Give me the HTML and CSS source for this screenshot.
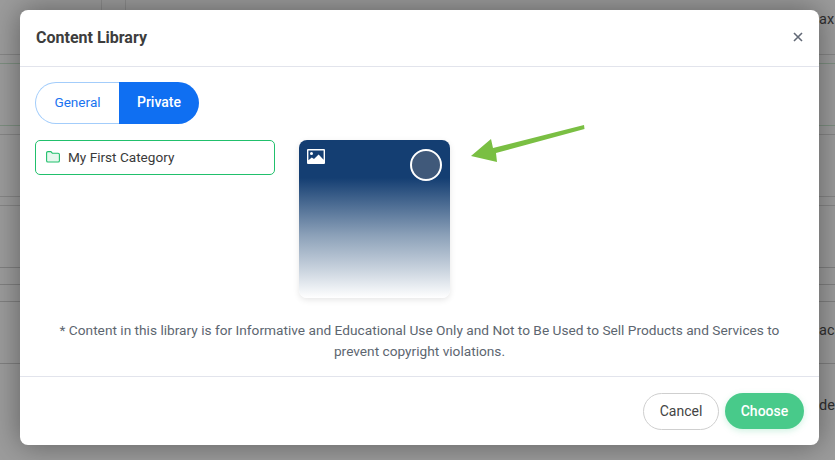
FILE: index.html
```html
<!DOCTYPE html>
<html lang="en">
<head>
<meta charset="utf-8">
<title>Content Library</title>
<link rel="stylesheet" href="styles.css">
</head>
<body>
<div class="backdrop">
  <span class="peek peek-ax">ax</span>
  <span class="peek peek-ace">ace</span>
  <span class="peek peek-de">de</span>
</div>
<div class="overlay">
  <section class="modal">
    <header class="modal-header">
      <h2 class="modal-title">Content Library</h2>
      <svg class="close" viewBox="0 0 10 10" width="10" height="10" aria-label="Close"><path d="M1 1l8 8M9 1l-8 8"/></svg>
    </header>
    <div class="modal-body">
      <div class="tabs">
        <button class="tab tab-general">General</button>
        <button class="tab tab-private">Private</button>
      </div>
      <div class="library">
        <div class="category">
          <svg class="folder" viewBox="0 0 14 12" width="14" height="12"><path d="M1.900.6h3l1.400 1.600h5.800c.7 0 1.300.6 1.300 1.300v6.200c0 .7-.6 1.300-1.300 1.300H1.900c-.7 0-1.300-.6-1.300-1.300V1.900C.6 1.200 1.200.6 1.900.6z"/></svg>
          <span>My First Category</span>
        </div>
        <div class="card">
          <svg class="image-icon" viewBox="0 0 18 15" width="18" height="15"><path fill-rule="evenodd" d="M1 0h16a1 1 0 0 1 1 1v13a1 1 0 0 1-1 1H1a1 1 0 0 1-1-1V1a1 1 0 0 1 1-1zm.4 1.400v9.800l3.400-2.800 2.200 1.600L11.600 5.500l5 5.200V1.400zM4.500 3a1.500 1.500 0 1 1 0 3 1.500 1.500 0 0 1 0-3z"/></svg>
          <span class="radio"></span>
        </div>
        <svg class="arrow" viewBox="0 0 114 38" width="114" height="38"><path d="M0 31L20 14 22 23 113 0 113.500 4 25 28 26 37z"/></svg>
      </div>
      <p class="note">* Content in this library is for Informative and Educational Use Only and Not to Be Used to Sell Products and Services to prevent copyright violations.</p>
    </div>
    <footer class="modal-footer">
      <button class="btn btn-cancel">Cancel</button>
      <button class="btn btn-choose">Choose</button>
    </footer>
  </section>
</div>
</body>
</html>
```

FILE: styles.css
```css
* { box-sizing: border-box; }
html, body { margin: 0; height: 100%; overflow: hidden; }
body {
  font-family: Roboto, "Liberation Sans", sans-serif;
  background: #9c9c9c;
}
.backdrop {
  position: fixed;
  inset: 0;
  background:
    linear-gradient(#868686, #868686) 0 54px / 100% 1px no-repeat,
    linear-gradient(#7d8f80, #7d8f80) 0 63px / 100% 1px no-repeat,
    linear-gradient(#7d8f80, #7d8f80) 0 125px / 100% 1px no-repeat,
    linear-gradient(#868686, #868686) 0 134px / 100% 1px no-repeat,
    linear-gradient(#868686, #868686) 0 196px / 100% 1px no-repeat,
    linear-gradient(#868686, #868686) 0 205px / 100% 1px no-repeat,
    linear-gradient(#808080, #808080) 0 267px / 100% 1px no-repeat,
    linear-gradient(#808080, #808080) 0 284px / 100% 1px no-repeat,
    linear-gradient(#808080, #808080) 0 301px / 100% 1px no-repeat,
    linear-gradient(#808080, #808080) 0 363px / 100% 1px no-repeat,
    linear-gradient(#8c8c8c, #8c8c8c) 101px 0 / 1px 10px no-repeat,
    linear-gradient(#8c8c8c, #8c8c8c) 125px 0 / 1px 10px no-repeat,
    #9c9c9c;
}
.peek {
  position: absolute;
  font-size: 14.5px;
  line-height: 16px;
  color: #2f2f2f;
}
.peek-ax { left: 819px; top: 12px; }
.peek-ace { left: 819px; top: 323px; }
.peek-de { left: 819px; top: 398px; }
.overlay {
  position: fixed;
  inset: 0;
  padding: 10px 16px 15px 20px;
}
.modal {
  width: 799px;
  height: 435px;
  background: #fff;
  border-radius: 8px;
  box-shadow: 0 0 30px rgba(0, 0, 0, .4);
  display: flex;
  flex-direction: column;
}
.modal-header {
  height: 57px;
  flex: none;
  padding: 0 16px 2px 16px;
  border-bottom: 1px solid #e2e4ec;
  display: flex;
  align-items: center;
  justify-content: space-between;
}
.modal-title {
  margin: 0;
  font-size: 16px;
  font-weight: 700;
  color: #3d3d3d;
}
.close { fill: none; stroke: #626976; stroke-width: 1.600; }
.modal-body {
  flex: 1;
  padding: 15px 15px 0;
  display: flex;
  flex-direction: column;
}
.tabs { display: flex; }
.tab {
  height: 42px;
  border: 1px solid #a3cdfb;
  font-family: inherit;
  font-size: 14px;
  font-weight: 500;
  padding: 0 0 2px;
}
.tab-general {
  width: 84px;
  background: #fff;
  color: #1a73f0;
  border-radius: 21px 0 0 21px;
  border-right: 0;
  font-size: 13.6px;
  font-weight: 400;
}
.tab-private {
  width: 80px;
  background: #0f6ff2;
  color: #fff;
  border: 0;
  border-radius: 0 21px 21px 0;
}
.library {
  display: flex;
  align-items: flex-start;
  margin-top: 16px;
  height: 158px;
}
.category {
  width: 240px;
  height: 35px;
  border: 1px solid #21c06c;
  border-radius: 5px;
  padding: 0 10px 1px;
  display: flex;
  align-items: center;
  gap: 8px;
  font-size: 13.6px;
  color: #3a3a3a;
}
.folder { fill: #e6f8ee; stroke: #21c06c; stroke-width: 1.100; flex: none; }
.card {
  width: 151px;
  height: 158px;
  margin-left: 24px;
  border-radius: 8px;
  background: linear-gradient(#143e72 0%, #143e72 24%, #8ba0b8 60%, #c9d3de 82%, #ffffff 100%);
  box-shadow: 0 2px 6px rgba(0, 0, 0, .1);
  padding: 9px 8px 0;
  display: flex;
  justify-content: space-between;
  align-items: flex-start;
  flex: none;
}
.image-icon { fill: #fff; }
.radio {
  width: 32px;
  height: 32px;
  border-radius: 50%;
  border: 2px solid #fff;
  background: #40597a;
}
.arrow {
  fill: #7abf43;
  flex: none;
  margin: -15px 0 0 21px;
  overflow: visible;
}
.note {
  margin: 22px auto 0;
  width: 730px;
  text-align: center;
  font-size: 13.7px;
  line-height: 21px;
  color: #5d6670;
}
.modal-footer {
  height: 69px;
  flex: none;
  border-top: 1px solid #e2e4ec;
  padding: 0 15px 0 0;
  display: flex;
  align-items: center;
  justify-content: flex-end;
  gap: 6px;
}
.btn {
  height: 37px;
  border-radius: 19px;
  font-family: inherit;
  font-size: 14px;
  padding: 0;
}
.btn-cancel {
  width: 76px;
  background: #fff;
  border: 1px solid #cfcfcf;
  color: #444;
}
.btn-choose {
  width: 79px;
  height: 36px;
  background: #48ca8a;
  border: 0;
  color: #fff;
  font-weight: 500;
  box-shadow: 0 2px 6px rgba(72, 202, 138, .25);
}
```
